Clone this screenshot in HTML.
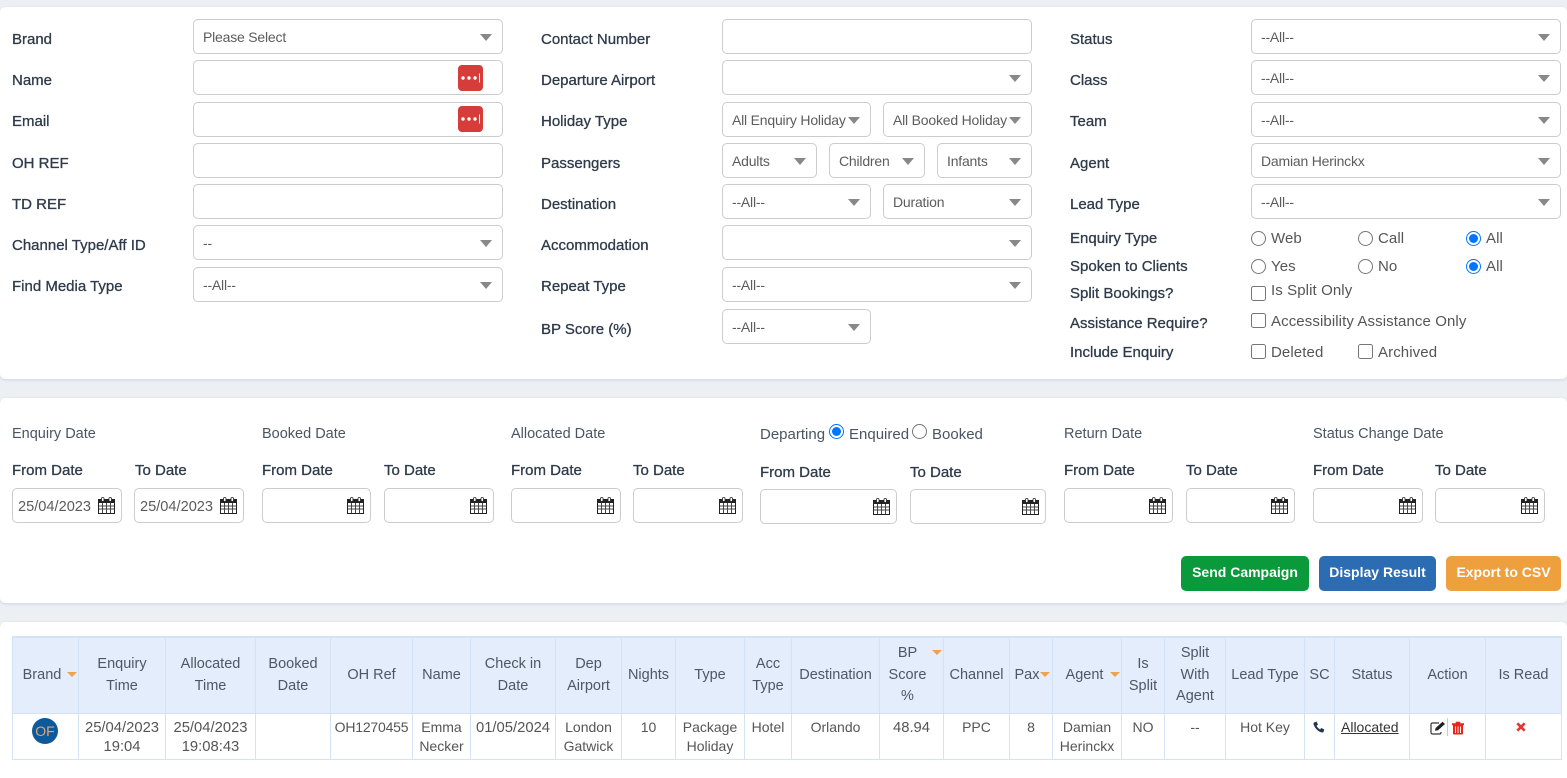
<!DOCTYPE html>
<html lang="en"><head><meta charset="utf-8"><title>Enquiries</title>
<style>
html,body{margin:0;padding:0;width:1567px;height:778px;overflow:hidden}
body{background:#ecf0f5;position:relative;font-family:"Liberation Sans",Arial,sans-serif;font-size:14px;color:#555}
.card{position:absolute;left:0;width:1567px;background:#fff;border-radius:5px;box-shadow:0 1px 3px rgba(0,0,0,.12)}
.l,.t,.h{position:absolute;white-space:nowrap;line-height:20px;height:20px}
.l{font-size:15px;color:#2f3b4a;-webkit-text-stroke:.3px #2f3b4a}
.t{font-size:15px;color:#555;letter-spacing:.1px}
.h{font-size:14.500px;color:#4a5563}
.s,.i{position:absolute;box-sizing:border-box;height:35px;background:#fff;border:1px solid #ccc;border-radius:5px}
.s{line-height:34px;padding-left:9px;color:#5c5c5c;white-space:nowrap;overflow:hidden;letter-spacing:-.2px}
.s:after{content:"";position:absolute;right:10px;top:14px;border-left:6.500px solid transparent;border-right:6.500px solid transparent;border-top:7px solid #888}
.a,.b{left:193px;width:310px}.m{left:722px;width:310px}.r{left:1251px;width:310px}
input{position:absolute;margin:0;width:15px;height:15px}
.d{position:absolute;box-sizing:border-box;height:35px;background:#fff;border:1px solid #ccc;border-radius:5px;line-height:36px;padding-left:5px;color:#5c5c5c;font-size:14.600px}
.d svg{position:absolute;right:6px;top:8px}
.btn{position:absolute;top:556px;height:35px;border-radius:5px;color:#fff;font-weight:bold;line-height:32px;text-align:center}
table{position:absolute;left:12px;top:636px;width:1549px;table-layout:fixed;border-collapse:collapse;color:#555}
th,td{border:1px solid #d3e2f4;padding:0;text-align:center}
th{background:#e3edfc;font-weight:normal;font-size:14.500px;height:73px;padding-top:1px;padding-bottom:1px;line-height:21.500px;color:#4d5866;border-top:2px solid #d3e2f4}
td{height:46px;vertical-align:top;line-height:19px;padding-top:4px;box-sizing:border-box}
td.n{font-size:14.800px;padding-top:5px}
.ar{position:absolute;border-left:5px solid transparent;border-right:5px solid transparent;border-top:5px solid #f0a24a}
.pw{position:absolute;left:458px;width:25px;height:26px;background:#d63c3a;border-radius:4px}
svg{display:block}
</style></head>
<body>
<svg width="0" height="0" style="position:absolute"><defs>
<symbol id="cal" viewBox="0 0 17 17">
<rect x=".5" y="2.500" width="16" height="14" fill="#fff" stroke="#222"/>
<rect x="1" y="2.500" width="15" height="3.500" fill="#222"/>
<path d="M1 9h15M1 12h15M4.500 6v10M8.500 6v10M12.500 6v10" stroke="#444" stroke-width="1" fill="none"/>
<rect x="3.500" y="0.500" width="2.500" height="4" rx="1" fill="#fff" stroke="#222" stroke-width=".8"/>
<rect x="11" y="0.500" width="2.500" height="4" rx="1" fill="#fff" stroke="#222" stroke-width=".8"/>
</symbol>
<symbol id="pw" viewBox="0 0 25 26"><circle cx="5" cy="13" r="1.700" fill="#fff"/><circle cx="11" cy="13" r="1.700" fill="#fff"/><circle cx="17" cy="13" r="1.700" fill="#fff"/><rect x="21" y="8.500" width="1" height="9" fill="#fff"/></symbol>
</defs></svg>

<div class="card" style="top:7px;height:372px"></div>
<div class="card" style="top:398px;height:205px"></div>
<div class="card" style="top:622px;height:156px;border-radius:5px 5px 0 0"></div>

<!-- Left column -->
<div class="l" style="left:12px;top:30px">Brand</div>
<div class="l" style="left:12px;top:71px">Name</div>
<div class="l" style="left:12px;top:112px">Email</div>
<div class="l" style="left:12px;top:154px">OH REF</div>
<div class="l" style="left:12px;top:195px">TD REF</div>
<div class="l" style="left:12px;top:236px">Channel Type/Aff ID</div>
<div class="l" style="left:12px;top:277px">Find Media Type</div>
<div class="s a" style="top:19px">Please Select</div>
<div class="i a" style="top:60px"></div>
<div class="i a" style="top:102px"></div>
<div class="pw" style="top:65px"><svg width="25" height="26"><use href="#pw"/></svg></div>
<div class="pw" style="top:106px"><svg width="25" height="26"><use href="#pw"/></svg></div>
<div class="i a" style="top:143px"></div>
<div class="i a" style="top:184px"></div>
<div class="s a" style="top:225px">--</div>
<div class="s a" style="top:267px">--All--</div>

<!-- Middle column -->
<div class="l" style="left:541px;top:30px">Contact Number</div>
<div class="l" style="left:541px;top:71px">Departure Airport</div>
<div class="l" style="left:541px;top:112px">Holiday Type</div>
<div class="l" style="left:541px;top:154px">Passengers</div>
<div class="l" style="left:541px;top:195px">Destination</div>
<div class="l" style="left:541px;top:236px">Accommodation</div>
<div class="l" style="left:541px;top:277px">Repeat Type</div>
<div class="l" style="left:541px;top:320px">BP Score (%)</div>
<div class="i m" style="top:19px"></div>
<div class="s m" style="top:60px"></div>
<div class="s" style="left:722px;width:149px;top:102px;padding-right:24px">All Enquiry Holiday</div>
<div class="s" style="left:883px;width:149px;top:102px;padding-right:24px"><span style="display:block;overflow:hidden;width:114px">All Booked Holiday</span></div>
<div class="s" style="left:722px;width:95px;top:143px">Adults</div>
<div class="s" style="left:829px;width:96px;top:143px">Children</div>
<div class="s" style="left:937px;width:95px;top:143px">Infants</div>
<div class="s" style="left:722px;width:149px;top:184px">--All--</div>
<div class="s" style="left:883px;width:149px;top:184px">Duration</div>
<div class="s m" style="top:225px"></div>
<div class="s m" style="top:267px">--All--</div>
<div class="s" style="left:722px;width:149px;top:309px">--All--</div>

<!-- Right column -->
<div class="l" style="left:1070px;top:30px">Status</div>
<div class="l" style="left:1070px;top:71px">Class</div>
<div class="l" style="left:1070px;top:112px">Team</div>
<div class="l" style="left:1070px;top:154px">Agent</div>
<div class="l" style="left:1070px;top:195px">Lead Type</div>
<div class="l" style="left:1070px;top:229px">Enquiry Type</div>
<div class="l" style="left:1070px;top:257px">Spoken to Clients</div>
<div class="l" style="left:1070px;top:284px">Split Bookings?</div>
<div class="l" style="left:1070px;top:314px">Assistance Require?</div>
<div class="l" style="left:1070px;top:343px">Include Enquiry</div>
<div class="s r" style="top:19px">--All--</div>
<div class="s r" style="top:60px">--All--</div>
<div class="s r" style="top:102px">--All--</div>
<div class="s r" style="top:143px">Damian Herinckx</div>
<div class="s r" style="top:184px">--All--</div>

<input type="radio" name="e" style="left:1251px;top:231px"><div class="t" style="left:1271px;top:229px">Web</div>
<input type="radio" name="e" style="left:1358px;top:231px"><div class="t" style="left:1378px;top:229px">Call</div>
<input type="radio" name="e" checked style="left:1466px;top:231px"><div class="t" style="left:1486px;top:229px">All</div>
<input type="radio" name="c" style="left:1251px;top:259px"><div class="t" style="left:1271px;top:257px">Yes</div>
<input type="radio" name="c" style="left:1358px;top:259px"><div class="t" style="left:1378px;top:257px">No</div>
<input type="radio" name="c" checked style="left:1466px;top:259px"><div class="t" style="left:1486px;top:257px">All</div>
<input type="checkbox" style="left:1251px;top:286px"><div class="t" style="left:1271px;top:281px">Is Split Only</div>
<input type="checkbox" style="left:1251px;top:313px"><div class="t" style="left:1271px;top:312px">Accessibility Assistance Only</div>
<input type="checkbox" style="left:1251px;top:344px"><div class="t" style="left:1271px;top:343px">Deleted</div>
<input type="checkbox" style="left:1358px;top:344px"><div class="t" style="left:1378px;top:343px">Archived</div>

<!-- Dates -->
<div class="h" style="left:12px;top:424px">Enquiry Date</div>
<div class="h" style="left:262px;top:424px">Booked Date</div>
<div class="h" style="left:511px;top:424px">Allocated Date</div>
<div class="h" style="left:760px;top:425px;font-size:15px">Departing</div>
<input type="radio" name="dp" checked style="left:829px;top:424px"><div class="h" style="left:849px;top:425px;font-size:15px">Enquired</div>
<input type="radio" name="dp" style="left:912px;top:424px"><div class="h" style="left:932px;top:425px;font-size:15px">Booked</div>
<div class="h" style="left:1064px;top:424px">Return Date</div>
<div class="h" style="left:1313px;top:424px">Status Change Date</div>

<div class="l" style="left:12px;top:461px">From Date</div><div class="l" style="left:135px;top:461px">To Date</div>
<div class="l" style="left:262px;top:461px">From Date</div><div class="l" style="left:384px;top:461px">To Date</div>
<div class="l" style="left:511px;top:461px">From Date</div><div class="l" style="left:633px;top:461px">To Date</div>
<div class="l" style="left:760px;top:463px">From Date</div><div class="l" style="left:910px;top:463px">To Date</div>
<div class="l" style="left:1064px;top:461px">From Date</div><div class="l" style="left:1186px;top:461px">To Date</div>
<div class="l" style="left:1313px;top:461px">From Date</div><div class="l" style="left:1435px;top:461px">To Date</div>

<div class="d" style="left:12px;width:110px;top:488px">25/04/2023<svg width="17" height="17"><use href="#cal"/></svg></div>
<div class="d" style="left:134px;width:110px;top:488px">25/04/2023<svg width="17" height="17"><use href="#cal"/></svg></div>
<div class="d" style="left:262px;width:109px;top:488px"><svg width="17" height="17"><use href="#cal"/></svg></div>
<div class="d" style="left:384px;width:110px;top:488px"><svg width="17" height="17"><use href="#cal"/></svg></div>
<div class="d" style="left:511px;width:110px;top:488px"><svg width="17" height="17"><use href="#cal"/></svg></div>
<div class="d" style="left:633px;width:110px;top:488px"><svg width="17" height="17"><use href="#cal"/></svg></div>
<div class="d" style="left:760px;width:137px;top:489px"><svg width="17" height="17"><use href="#cal"/></svg></div>
<div class="d" style="left:910px;width:136px;top:489px"><svg width="17" height="17"><use href="#cal"/></svg></div>
<div class="d" style="left:1064px;width:109px;top:488px"><svg width="17" height="17"><use href="#cal"/></svg></div>
<div class="d" style="left:1186px;width:109px;top:488px"><svg width="17" height="17"><use href="#cal"/></svg></div>
<div class="d" style="left:1313px;width:110px;top:488px"><svg width="17" height="17"><use href="#cal"/></svg></div>
<div class="d" style="left:1435px;width:110px;top:488px"><svg width="17" height="17"><use href="#cal"/></svg></div>

<div class="btn" style="left:1181px;width:128px;background:#0a9a3c">Send Campaign</div>
<div class="btn" style="left:1319px;width:117px;background:#2b6cb3">Display Result</div>
<div class="btn" style="left:1446px;width:115px;background:#ee9f3e">Export to CSV</div>

<!-- Table -->
<table>
<colgroup><col style="width:66px"><col style="width:87px"><col style="width:90px"><col style="width:75px"><col style="width:82px"><col style="width:58px"><col style="width:85px"><col style="width:66px"><col style="width:54px"><col style="width:69px"><col style="width:47px"><col style="width:88px"><col style="width:64px"><col style="width:66px"><col style="width:43px"><col style="width:69px"><col style="width:43px"><col style="width:61px"><col style="width:79px"><col style="width:30px"><col style="width:75px"><col style="width:76px"><col style="width:76px"></colgroup>
<tr>
<th style="padding-right:7px">Brand</th><th>Enquiry<br>Time</th><th>Allocated<br>Time</th><th>Booked<br>Date</th><th>OH Ref</th><th>Name</th><th>Check in<br>Date</th><th>Dep<br>Airport</th><th>Nights</th><th>Type</th><th>Acc<br>Type</th><th>Destination</th><th style="padding-right:8px">BP<br>Score<br>%</th><th>Channel</th><th style="padding-right:8px">Pax</th><th style="padding-right:5px">Agent</th><th>Is<br>Split</th><th>Split<br>With<br>Agent</th><th>Lead Type</th><th>SC</th><th>Status</th><th>Action</th><th>Is Read</th>
</tr>
<tr>
<td></td><td class="n">25/04/2023<br>19:04</td><td class="n">25/04/2023<br>19:08:43</td><td></td><td style="letter-spacing:-.2px">OH1270455</td><td>Emma<br>Necker</td><td class="n">01/05/2024</td><td>London<br>Gatwick</td><td>10</td><td>Package<br>Holiday</td><td>Hotel</td><td>Orlando</td><td class="n">48.94</td><td>PPC</td><td>8</td><td>Damian<br>Herinckx</td><td>NO</td><td>--</td><td>Hot Key</td><td></td><td style="text-align:left;padding-left:6px"><span style="text-decoration:underline;color:#333">Allocated</span></td><td></td><td></td>
</tr>
</table>

<div class="ar" style="left:67px;top:672px"></div>
<div class="ar" style="left:932px;top:650px"></div>
<div class="ar" style="left:1040px;top:672px"></div>
<div class="ar" style="left:1110px;top:672px"></div>

<div style="position:absolute;left:32px;top:718px;width:26px;height:26px;border-radius:50%;background:#0c5a9c;color:#eda06a;line-height:26px;text-align:center">OF</div>

<svg style="position:absolute;left:1313px;top:721px" width="12" height="12" viewBox="0 0 12 12"><path d="M1 1.500L3.500 .5 5 3.500 3.600 4.800C4.300 6.300 5.500 7.600 7 8.400L8.400 7 11.300 8.500 10.500 11C10 11.600 9 11.600 8 11.300 4.500 10 1.800 7 .6 3.500.4 2.800.5 2 1 1.500Z" fill="#23374d"/></svg>

<svg style="position:absolute;left:1430px;top:721px" width="16" height="14" viewBox="0 0 16 14"><path d="M11 11v.5a1.500 1.500 0 0 1-1.500 1.500H2.500A1.500 1.500 0 0 1 1 11.500V3.500A1.500 1.500 0 0 1 2.500 2H9" fill="none" stroke="#333" stroke-width="1.200"/><path d="M5 9.800L5.600 7 12.500 .8 15 3 8 9.300Z" fill="#222"/></svg>
<div style="position:absolute;left:1447px;top:718px;width:1px;height:18px;background:#ccc"></div>
<svg style="position:absolute;left:1452px;top:721px" width="12" height="14" viewBox="0 0 12 14"><path d="M0 2.500h12v1.500H0zM4 2.500V1h4v1.500" fill="#e8261c" stroke="#e8261c" stroke-width=".6"/><path d="M1 4h10v8.500a1 1 0 0 1-1 1H2a1 1 0 0 1-1-1Z" fill="#e8261c"/><path d="M3.500 5.500v6.500M6 5.500v6.500M8.500 5.500v6.500" stroke="#fff" stroke-width=".9"/></svg>
<svg style="position:absolute;left:1516px;top:722px" width="10" height="10" viewBox="0 0 10 10"><path d="M1.300 1.300L8.700 8.700M8.700 1.300L1.300 8.700" stroke="#dd3a3c" stroke-width="2.700"/></svg>
</body></html>
